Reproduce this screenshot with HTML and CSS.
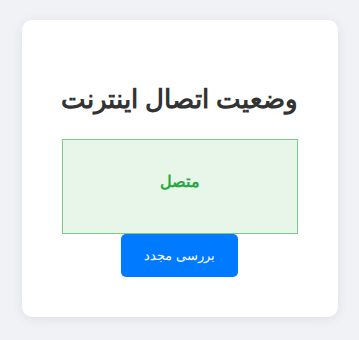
FILE: index.html
```html
<!DOCTYPE html>
<html lang="fa" dir="rtl">
<head>
<meta charset="utf-8">
<link rel="stylesheet" href="styles.css">
</head>
<body>
<div class="card">
  <h1 class="title">وضعیت اتصال اینترنت</h1>
  <div class="status">متصل</div>
  <button class="btn">بررسی مجدد</button>
</div>
</body>
</html>
```
FILE: styles.css
```css
html, body {
  margin: 0;
  padding: 0;
}
body {
  background: #f0f2f5;
  font-family: "Liberation Sans", Arial, sans-serif;
  padding: 20px 0;
}
.card {
  width: 236px;
  margin: 0 auto;
  background: #fff;
  border-radius: 10px;
  padding: 40px;
  box-shadow: 0 2px 12px rgba(0,0,0,0.08);
  text-align: center;
}
.title {
  font-size: 26px;
  color: #333;
  margin: 24px -5px 24px;
  white-space: nowrap;
  font-weight: bold;
}
.status {
  border: 1px solid #7cc88a;
  background: #e8f5e9;
  color: #28a745;
  font-weight: bold;
  font-size: 16px;
  padding: 32px 0 42px;
}
.btn {
  background: #007bff;
  color: #fff;
  border: none;
  border-radius: 5px;
  font-family: "Liberation Sans", Arial, sans-serif;
  font-size: 13px;
  padding: 14px 23px;
}
```
